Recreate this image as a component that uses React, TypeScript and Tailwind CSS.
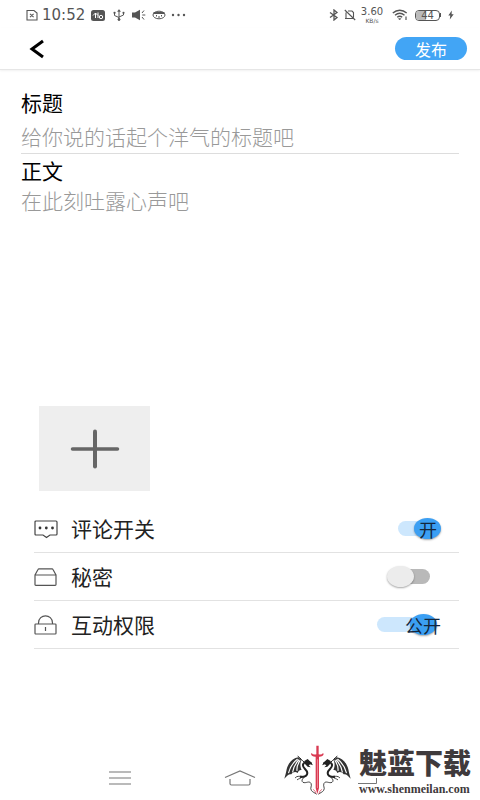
import { useState } from 'react'
import type { ReactNode } from 'react'

function StatusBar() {
  return (
    <div className="flex h-7 items-center justify-between px-[26px] pt-[2px] text-[#555]">
      <div className="flex items-center">
        <svg className="h-3 w-3" viewBox="0 0 12 12" fill="none" stroke="currentColor" strokeWidth="1.1">
          <path d="M1 1.5h7l3 2.6v6.9H1zM4 4.8l3.6 3.4M7.6 4.8L4 8.2" />
        </svg>
        <span className="ml-1 w-12 font-['DejaVu_Sans',sans-serif] text-[15px] leading-5">10:52</span>
        <svg className="ml-px h-[11px] w-[14px]" viewBox="0 0 14 11">
          <rect width="14" height="11" rx="2.5" fill="currentColor" />
          <path d="M2 5.5l2.500-2.500v5M4.500 3l2.500 2.500M7 2.500v5.500" stroke="#fff" fill="none" />
          <circle cx="10" cy="7" r="1.700" stroke="#fff" fill="none" />
        </svg>
        <svg className="ml-2 h-3 w-3" viewBox="0 0 12 12" fill="none" stroke="currentColor">
          <path d="M6 1v9M1.500 4v2.500L6 8.500M10.500 4v2L6 8" />
          <path d="M4.500 2.500L6 .5l1.500 2zM.8 3h1.500v1.400H.8zM9.800 3h1.400v1.400H9.800z" fill="currentColor" strokeWidth=".4" />
          <circle cx="6" cy="10.500" r="1" fill="currentColor" />
        </svg>
        <svg className="ml-[7px] h-3 w-[14px]" viewBox="0 0 14 12">
          <path d="M0 3.500h3L8 .8v10.400L3 8.500H0z" fill="currentColor" />
          <path d="M10 4l2-2.500M10.300 6h3M10 8l2 2.500" stroke="currentColor" fill="none" />
        </svg>
        <svg className="ml-[6px] h-[10px] w-[14px]" viewBox="0 0 14 10" fill="none" stroke="currentColor">
          <ellipse cx="7" cy="5" rx="6" ry="3.800" />
          <path d="M1.500 3h11" strokeWidth="2" />
          <path d="M4.500 5v1.500M9.500 5v1.500M6 7h2" />
        </svg>
        <svg className="ml-[5px] h-1 w-4" viewBox="0 0 16 4" fill="currentColor">
          <circle cx="2" cy="2" r="1.200" />
          <circle cx="7.500" cy="2" r="1.200" />
          <circle cx="13" cy="2" r="1.200" />
        </svg>
      </div>
      <div className="flex items-center">
        <svg className="h-3 w-[10px]" viewBox="0 0 10 12" fill="none" stroke="currentColor" strokeWidth="1.300">
          <path d="M1 3.500l7 5L5 11V1l3 2.500-7 5" />
        </svg>
        <svg className="ml-[5px] h-3 w-3" viewBox="0 0 12 12" fill="none" stroke="currentColor" strokeWidth="1.100">
          <path d="M2 9.500V3.500M4 2h4l1.500 1.500v5M1 9.500h8M.8 1l10.400 10" />
        </svg>
        <div className="ml-1 flex w-6 flex-col items-center font-['DejaVu_Sans',sans-serif]">
          <span className="text-[10px] leading-[11px]">3.60</span>
          <span className="text-[6px] leading-[7px]">KB/s</span>
        </div>
        <svg className="ml-2 h-3 w-4" viewBox="0 0 16 12" fill="none" stroke="currentColor" strokeWidth="1.400">
          <path d="M.8 4C5 .4 10.500.4 14.700 4M3 6.200c3-2.500 6.500-2.500 9.500 0M5.200 8.300c1.700-1.300 3.500-1.300 5 0" />
          <path d="M6.500 9.600h2.400L7.700 11z" fill="currentColor" strokeWidth=".5" />
          <path d="M14 7.500v3.500" strokeWidth="1.200" />
        </svg>
        <div className="relative ml-[7px] h-[11px] w-[25px] overflow-hidden rounded-[4px] border border-[#555]">
          <div className="h-full w-[44%] bg-[#bbb]" />
          <span className="absolute inset-0 text-center font-['DejaVu_Sans',sans-serif] text-[10px] leading-[9px]">44</span>
        </div>
        <div className="h-1 w-px bg-[#555]" />
        <svg className="ml-[7px] h-[10px] w-[6px]" viewBox="0 0 6 10" fill="currentColor">
          <path d="M3.800.5L.3 5.500h2L1.800 9.500l3.900-5.200H3.600z" />
        </svg>
      </div>
    </div>
  )
}

function CommentIcon() {
  return (
    <svg className="h-5 w-6" viewBox="0 0 24 20" fill="none" stroke="#444" strokeWidth="1.200">
      <path d="M2 2h20q1 0 1 1v12q0 1-1 1h-6L12.500 18.500 9 16H2q-1 0-1-1V3q0-1 1-1z" />
      <g fill="#333" stroke="none">
        <circle cx="6" cy="9" r="1.400" />
        <circle cx="12.300" cy="9" r="1.400" />
        <circle cx="18.500" cy="9" r="1.400" />
      </g>
    </svg>
  )
}

function BoxIcon() {
  return (
    <svg className="h-5 w-6" viewBox="0 0 24 20" fill="none" stroke="#555" strokeWidth="1.200">
      <path d="M1 8h21v9.500q0 .8-.8.8H1.800q-.8 0-.8-.8zM1 8l3-5.500q.3-.7 1-.7h13q.7 0 1 .7L22 8" />
    </svg>
  )
}

function LockIcon() {
  return (
    <svg className="h-5 w-6" viewBox="0 0 24 20" fill="none" stroke="#555" strokeWidth="1.200">
      <rect x="1" y="9" width="21" height="10" rx=".8" />
      <path d="M4.500 9V8C4.500-1.500 18.500-1.500 18.500 8V9M11.500 12v4" />
    </svg>
  )
}

type RowProps = {
  id: string
  icon: ReactNode
  label: string
  children: ReactNode
}

function SettingRow({ id, icon, label, children }: RowProps) {
  return (
    <div className="flex h-12 items-center border-b border-[#e2e2e2]">
      {icon}
      <label htmlFor={id} className="ml-[13px] flex-1 pb-px text-[21px] leading-6 text-[#222]">
        {label}
      </label>
      {children}
    </div>
  )
}

type SwitchProps = {
  id: string
  checked: boolean
  onChange: (value: boolean) => void
  text?: string
  wide?: boolean
}

function Switch({ id, checked, onChange, text, wide }: SwitchProps) {
  return (
    <span className={`relative flex h-[21px] items-center ${wide ? 'w-16' : 'w-[43px]'} ${checked ? 'mr-[18px]' : 'mr-[29px]'}`}>
      <input
        id={id}
        type="checkbox"
        role="switch"
        checked={checked}
        onChange={(e) => onChange(e.target.checked)}
        className={`h-[15px] w-full appearance-none rounded-full ${checked ? 'mr-3 bg-[#cde7fd]' : 'ml-3 bg-[#b9b9b9]'}`}
      />
      <span
        className={`pointer-events-none absolute top-0 h-[21px] w-[27px] rounded-[50%] shadow-[0_1px_2px_rgba(0,0,0,0.35)] ${
          checked ? (wide ? 'right-1 bg-[#3b9ff3]' : 'right-0 bg-[#3b9ff3]') : 'left-0 bg-[#ececec]'
        }`}
      />
      {checked && text && (
        <span className={`pointer-events-none absolute text-lg leading-5 text-[#13263c] ${wide ? 'right-0' : 'right-1'}`}>{text}</span>
      )}
    </span>
  )
}

function Dragon() {
  return (
    <g stroke="#222" fill="none" strokeLinecap="round" strokeLinejoin="round">
      <path d="M52 52C34 55 21 70 17 88C15 98 13 106 10 116C18 107 24 101 31 103C36 96 43 94 50 99C52 91 57 89 62 90C56 78 58 66 62 60z" fill="#333" stroke="none" />
      <path d="M49 58C36 68 27 82 23 98M53 60C43 71 37 84 35 96M57 62C50 72 47 82 48 91" stroke="#fff" strokeWidth="3.500" />
      <path d="M51 49C60 55 62 61 68 65" strokeWidth="3" />
      <path d="M90 70C80 62 69 65 66 74C64 85 78 88 79 99C79 108 69 111 59 111" strokeWidth="6" />
      <path d="M70 63L80 57L90 67L96 76L88 73L83 76L89 82L80 80L72 72z" fill="#222" stroke="none" />
      <path d="M60 108C53 111 50 106 43 113M62 112C57 117 54 115 49 119" strokeWidth="2.500" />
      <path d="M77 106C65 113 59 122 66 127C75 131 84 121 90 130C94 138 86 144 91 151C95 157 101 158 106 162" strokeWidth="2.500" />
    </g>
  )
}

function Watermark() {
  return (
    <a href="#" className="absolute bottom-0 right-[9px] flex items-start text-[#3f3a3c]">
      <svg className="mr-[6px] h-[60px] w-[72px]" viewBox="0 0 216 180">
        <Dragon />
        <g transform="translate(219 0) scale(-1 1)">
          <Dragon />
        </g>
        <path d="M106 17h7v26q10 2 13-4l2 3q-2 8-13 8h-1v94l-5 18-5-18V50h-1q-11 0-13-8l2-3q3 6 14 4z" fill="#d93a52" />
        <path d="M109.500 58v86" stroke="#f5a9b2" strokeWidth="2" />
        <path d="M96 148q8 4 9 13M123 148q-8 4-9 13" stroke="#d93a52" strokeWidth="2" fill="none" />
      </svg>
      <span className="flex flex-col pt-[6px]">
        <span className="text-[28px] font-black leading-8">魅蓝下载</span>
        <span className="mt-1 font-['Liberation_Serif',serif] text-xs font-bold leading-[14px]">www.shenmeilan.com</span>
      </span>
    </a>
  )
}

function NavBar() {
  return (
    <nav className="relative flex h-[60px] items-center justify-center pt-4">
      <button aria-label="Recent apps" className="flex w-1/4 justify-center">
        <svg className="h-4 w-6" viewBox="0 0 24 16" stroke="#777" strokeWidth="1.200">
          <path d="M1 2h22M1 8h22M1 14h22" />
        </svg>
      </button>
      <button aria-label="Home" className="flex w-1/4 justify-center">
        <svg className="h-4 w-8" viewBox="0 0 32 16" fill="none" stroke="#777" strokeWidth="1.200">
          <path d="M1 7.500L16 1l15 6.500M6 9v4.500q0 1.500 1.500 1.500h17q1.500 0 1.500-1.500V9" />
        </svg>
      </button>
      <button aria-label="Back" className="flex w-1/4 justify-center">
        <svg className="h-4 w-9" viewBox="0 0 36 16" fill="none" stroke="#777">
          <path d="M16 13.500h18.500V8" />
        </svg>
      </button>
      <Watermark />
    </nav>
  )
}

export default function App() {
  const [comments, setComments] = useState(true)
  const [secret, setSecret] = useState(false)
  const [open, setOpen] = useState(true)

  return (
    <div className="flex min-h-screen flex-col bg-white font-['Noto_Sans_CJK_SC',sans-serif]">
      <StatusBar />
      <header className="flex h-[42px] items-center justify-between border-b border-[#e6e6e6] pl-[29px] pr-[13px] shadow-[0_1px_2px_rgba(0,0,0,0.06)]">
        <button aria-label="返回">
          <svg className="h-5 w-4" viewBox="0 0 16 20" fill="none" stroke="#000" strokeWidth="3">
            <path d="M14 2L3 10l11 8" />
          </svg>
        </button>
        <button className="h-[23px] w-[72px] rounded-full bg-[#42a5f5] text-base leading-5 text-white">发布</button>
      </header>

      <main className="flex flex-1 flex-col px-[21px] pt-5">
        <label htmlFor="title" className="text-[21px] leading-6 text-black">标题</label>
        <input
          id="title"
          placeholder="给你说的话起个洋气的标题吧"
          className="mt-[7px] h-[33px] w-full border-b border-[#ddd] pb-[2px] text-[21px] leading-6 outline-none placeholder:font-light placeholder:text-[#999]"
        />
        <label htmlFor="content" className="mt-1 text-[21px] leading-6 text-black">正文</label>
        <textarea
          id="content"
          placeholder="在此刻吐露心声吧"
          className="mt-[6px] min-h-24 w-full flex-1 resize-none text-[21px] leading-6 outline-none placeholder:font-light placeholder:text-[#999]"
        />

        <button aria-label="添加图片" className="ml-[18px] mt-4 flex h-[85px] w-[111px] items-center justify-center bg-[#eee]">
          <svg className="h-10 w-[50px]" viewBox="0 0 50 40" stroke="#666" strokeLinecap="round">
            <path d="M2.500 20h45" strokeWidth="3.500" />
            <path d="M25 2.500v35" strokeWidth="4" />
          </svg>
        </button>

        <div className="ml-[13px] mt-[14px]">
          <SettingRow id="comments" icon={<CommentIcon />} label="评论开关">
            <Switch id="comments" checked={comments} onChange={setComments} text="开" />
          </SettingRow>
          <SettingRow id="secret" icon={<BoxIcon />} label="秘密">
            <Switch id="secret" checked={secret} onChange={setSecret} />
          </SettingRow>
          <SettingRow id="open" icon={<LockIcon />} label="互动权限">
            <Switch id="open" checked={open} onChange={setOpen} text="公开" wide />
          </SettingRow>
        </div>
      </main>

      <div className="h-[91px]" />
      <NavBar />
    </div>
  )
}
